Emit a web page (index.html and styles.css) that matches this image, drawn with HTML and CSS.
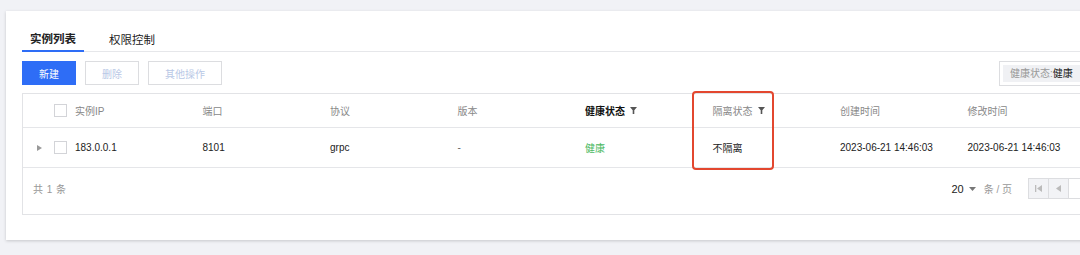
FILE: index.html
```html
<!DOCTYPE html>
<html>
<head>
    <meta charset="UTF-8">
    <title>实例列表</title>
    <link rel="stylesheet" href="styles.css">
</head>
<body>
    <div class="card">
        <div class="tabs">
            <div class="tab active">实例列表</div>
            <div class="tab">权限控制</div>
        </div>

        <div class="toolbar">
            <div class="actions">
                <button class="btn primary">新建</button>
                <button class="btn disabled">删除</button>
                <button class="btn disabled">其他操作</button>
            </div>
            <div class="filter-box">
                <span class="filter-tag"><span class="filter-key">健康状态:</span>健康</span>
            </div>
        </div>

        <div class="table">
            <div class="row head">
                <div class="lead">
                    <span class="arrow blank"></span>
                    <span class="check"></span>
                </div>
                <div class="cell">实例IP</div>
                <div class="cell">端口</div>
                <div class="cell">协议</div>
                <div class="cell">版本</div>
                <div class="cell strong">健康状态
                    <svg class="funnel" width="7" height="7" viewBox="0 0 7 7"><path d="M0 0h7L4.3 3.2V7H2.7V3.2z"/></svg>
                </div>
                <div class="cell">隔离状态
                    <svg class="funnel" width="7" height="7" viewBox="0 0 7 7"><path d="M0 0h7L4.3 3.2V7H2.7V3.2z"/></svg>
                </div>
                <div class="cell">创建时间</div>
                <div class="cell">修改时间</div>
            </div>
            <div class="row body">
                <div class="lead">
                    <svg class="arrow" width="5" height="6" viewBox="0 0 5 6"><path d="M0 0L5 3L0 6z"/></svg>
                    <span class="check"></span>
                </div>
                <div class="cell">183.0.0.1</div>
                <div class="cell">8101</div>
                <div class="cell">grpc</div>
                <div class="cell muted">-</div>
                <div class="cell ok">健康</div>
                <div class="cell">不隔离</div>
                <div class="cell">2023-06-21 14:46:03</div>
                <div class="cell">2023-06-21 14:46:03</div>
            </div>
            <div class="foot">
                <span class="total">共 1 条</span>
                <div class="pager">
                    <span class="size">20</span>
                    <svg class="caret" width="7" height="4" viewBox="0 0 7 4"><path d="M0 0h7L3.5 4z"/></svg>
                    <span class="unit">条 / 页</span>
                    <div class="pages">
                        <span class="page-btn">
                            <svg width="7" height="7" viewBox="0 0 7 7"><path d="M0 0h1.3v7H0zM7 0v7L2 3.5z"/></svg>
                        </span>
                        <span class="page-btn">
                            <svg width="5" height="7" viewBox="0 0 5 7"><path d="M5 0v7L0 3.5z"/></svg>
                        </span>
                        <span class="page-input"></span>
                    </div>
                </div>
            </div>
        </div>

        <div class="mark"></div>
    </div>
</body>
</html>
```

FILE: styles.css
```css
body {
    margin: 0;
    background: #f1f2f6;
    font-family: "Liberation Sans", "Noto Sans CJK SC", sans-serif;
    color: #333;
    overflow: hidden;
    height: 255px;
}
.card {
    position: relative;
    margin: 11px 0 0 6px;
    width: 1100px;
    padding: 18px 16px 25px;
    background: #fff;
    box-shadow: 0 1px 3px rgba(0,0,0,0.18);
}
.tabs {
    display: flex;
    gap: 17px;
    border-bottom: 1px solid #e6e7ea;
}
.tab {
    padding: 0 8px;
    line-height: 22px;
    font-size: 11.5px;
    color: #222;
}
.tab.active {
    font-weight: bold;
    border-bottom: 2px solid #2e6df6;
    margin-bottom: -1px;
    line-height: 21px;
}
.toolbar {
    display: flex;
    justify-content: space-between;
    align-items: center;
    margin-top: 9px;
    height: 24px;
}
.actions {
    display: flex;
    gap: 9px;
}
.btn {
    height: 24px;
    padding: 0 16px;
    border: 1px solid #dcdde0;
    background: #fff;
    font-family: inherit;
    font-size: 10px;
}
.btn.primary {
    background: #2e6df6;
    border-color: #2e6df6;
    color: #fff;
}
.btn.disabled {
    color: #b9c8e6;
}
.filter-box {
    width: 123px;
    height: 25px;
    box-sizing: border-box;
    border: 1px solid #dcdde0;
    padding: 3px;
}
.filter-tag {
    display: block;
    height: 17px;
    line-height: 17px;
    padding-left: 7px;
    background: #f0f1f4;
    font-size: 10px;
    color: #222;
}
.filter-key {
    color: #999;
}
.table {
    margin-top: 8px;
    border: 1px solid #e2e3e6;
}
.row {
    display: flex;
    align-items: center;
    border-bottom: 1px solid #e5e6e9;
    font-size: 10px;
}
.row.head {
    height: 33px;
    color: #888;
}
.row.body {
    height: 39px;
    color: #222;
}
.lead {
    display: flex;
    align-items: center;
    width: 52px;
    padding-left: 14px;
    box-sizing: border-box;
}
.arrow {
    width: 5px;
    fill: #999;
}
.arrow.blank {
    display: block;
    height: 6px;
}
.check {
    width: 11px;
    height: 11px;
    margin-left: 12px;
    border: 1px solid #d3d4d8;
    background: #fff;
}
.cell {
    width: 127.5px;
    flex-shrink: 0;
    display: flex;
    align-items: center;
    gap: 5px;
}
.cell.strong {
    color: #111;
    font-weight: bold;
}
.cell.muted {
    color: #666;
}
.funnel {
    fill: #555;
}
.cell.ok {
    color: #4cb963;
}
.foot {
    display: flex;
    justify-content: space-between;
    align-items: center;
    height: 21px;
    padding: 10px 10px 15px 10px;
    font-size: 10px;
}
.total {
    color: #999;
    word-spacing: 1px;
}
.pager {
    display: flex;
    align-items: center;
}
.size {
    color: #222;
    font-size: 11px;
}
.caret {
    fill: #777;
    margin: 0 8px 0 5px;
}
.unit {
    color: #999;
    margin-right: 16px;
}
.pages {
    display: flex;
    height: 21px;
}
.page-btn {
    width: 20px;
    display: flex;
    align-items: center;
    justify-content: center;
    background: #f2f3f6;
    border: 1px solid #dcdde0;
    border-right: none;
    box-sizing: border-box;
    fill: #bbb;
}
.page-input {
    width: 43px;
    border: 1px solid #dcdde0;
    box-sizing: border-box;
}
.mark {
    position: absolute;
    left: 686px;
    top: 80px;
    width: 82px;
    height: 79px;
    box-sizing: border-box;
    border: 2px solid #e3472f;
    border-radius: 4px;
}
```
